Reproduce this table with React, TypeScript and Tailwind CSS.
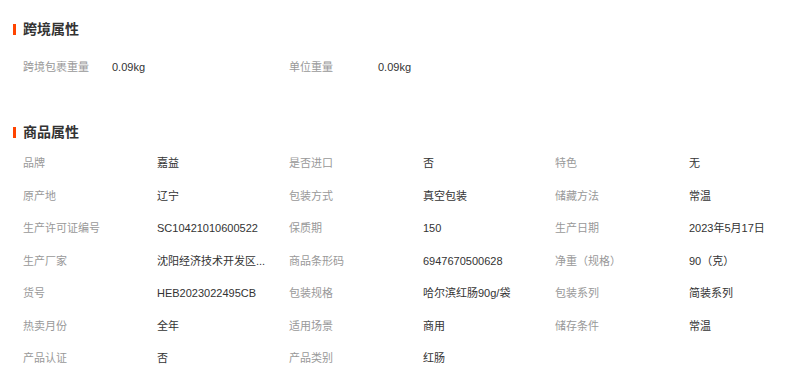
import React from 'react';

type Pair = [string, string];

const crossBorder: Pair[] = [
  ['跨境包裹重量', '0.09kg'],
  ['单位重量', '0.09kg'],
];

const goodsRows: Pair[][] = [
  [['品牌', '嘉益'], ['是否进口', '否'], ['特色', '无']],
  [['原产地', '辽宁'], ['包装方式', '真空包装'], ['储藏方法', '常温']],
  [['生产许可证编号', 'SC10421010600522'], ['保质期', '150'], ['生产日期', '2023年5月17日']],
  [['生产厂家', '沈阳经济技术开发区...'], ['商品条形码', '6947670500628'], ['净重（规格）', '90（克）']],
  [['货号', 'HEB2023022495CB'], ['包装规格', '哈尔滨红肠90g/袋'], ['包装系列', '简装系列']],
  [['热卖月份', '全年'], ['适用场景', '商用'], ['储存条件', '常温']],
  [['产品认证', '否'], ['产品类别', '红肠']],
];

function SectionTitle({ text, className = '' }: { text: string; className?: string }) {
  return (
    <div className={`flex items-center h-5 ${className}`}>
      <span className="w-[3px] h-[11px] bg-[#ff4400] mr-[7px]" />
      <span className="text-[14px] font-bold text-[#333] leading-5">{text}</span>
    </div>
  );
}

export default function App() {
  return (
    <div
      className="w-[802px] h-[368px] bg-white overflow-hidden pt-[19px] pl-[13px]"
      style={{ fontFamily: '"Liberation Sans", "Noto Sans CJK SC", sans-serif' }}
    >
      <SectionTitle text="跨境属性" />
      <div className="mt-[12px] pl-[10px] flex h-[32px] items-center text-[11px]">
        {crossBorder.map(([label, value]) => (
          <div key={label} className="flex w-[266px] shrink-0">
            <span className="w-[89px] text-[#999]">{label}</span>
            <span className="text-[#333]">{value}</span>
          </div>
        ))}
      </div>

      <SectionTitle text="商品属性" className="mt-[39px]" />
      <div className="mt-[5px] pl-[10px] text-[11px]">
        {goodsRows.map((row, i) => (
          <div key={i} className="flex h-[32.5px] items-center">
            {row.map(([label, value]) => (
              <div key={label} className="flex w-[266px] shrink-0">
                <span className="w-[134px] shrink-0 text-[#999]">{label}</span>
                <span className="max-w-[120px] whitespace-nowrap text-[#333]">{value}</span>
              </div>
            ))}
          </div>
        ))}
      </div>
    </div>
  );
}
